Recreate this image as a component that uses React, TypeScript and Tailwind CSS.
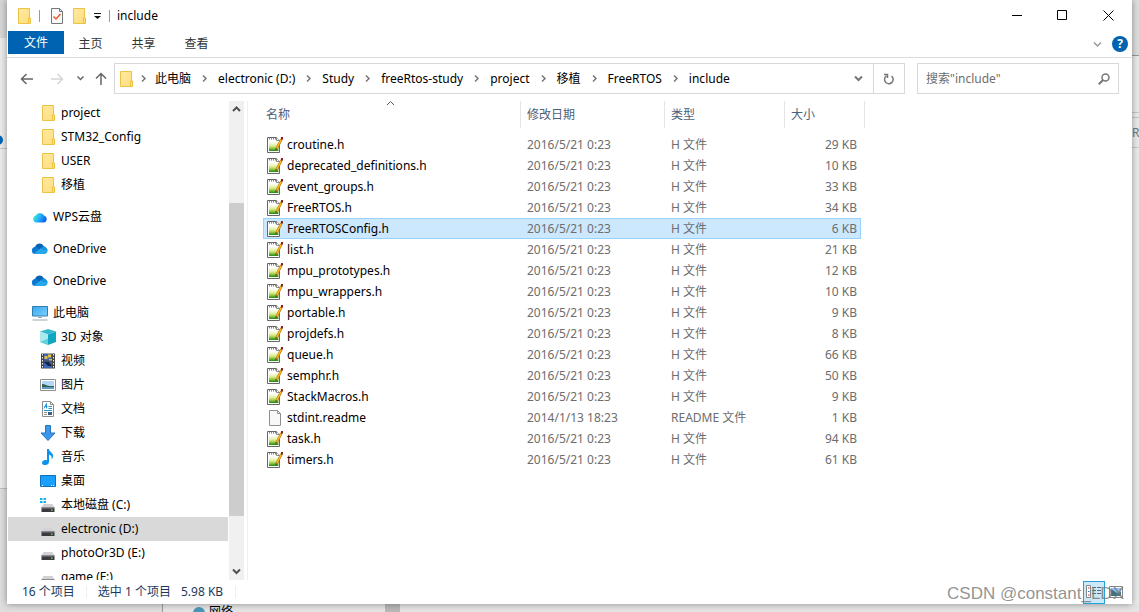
import type { ReactNode } from 'react';

type TreeItem = {
  name: string;
  icon: ReactNode;
  level: number;
  gap?: boolean; // espacio extra antes de cada grupo
  selected?: boolean;
};

const FolderIcon = () => (
  <svg width="14" height="16" viewBox="0 0 14 16" className="shrink-0">
    <defs>
      <linearGradient id="folder" x1="0" y1="0" x2="1" y2="1">
        <stop offset="0" stopColor="#ffe9a2" />
        <stop offset="1" stopColor="#ffdd7c" />
      </linearGradient>
    </defs>
    <path d="M1.500.5h11v9.500h1v5.500h-12z" fill="url(#folder)" stroke="#ecc444" />
    <path d="M11.500 15.500v-5.500h2" fill="none" stroke="#ecc444" />
  </svg>
);

const CloudIcon = () => (
  <svg width="16" height="16" viewBox="0 0 16 16" className="shrink-0">
    <path d="M3 7a4.600 4.600 0 0 1 8.500-2.300L13 7.500 6 9.500z" fill="#0a62b5" />
    <path d="M0 10A3.400 3.400 0 0 1 4.500 6.100L11 10.500 3 13A3 3 0 0 1 0 10z" fill="#0b78d4" />
    <path d="M9.500 6.800a4 4 0 0 1 4-.1A3.300 3.300 0 0 1 13 13H3l-1-.5 7.500-5.700z" fill="#28a8ea" />
    <path d="M10.500 5.500a3.500 3.500 0 0 1 4.200 2l1.100 2-7-1.500z" fill="#1490df" />
  </svg>
);

const WpsIcon = () => (
  <svg width="16" height="16" viewBox="0 0 16 16" className="shrink-0">
    <defs>
      <linearGradient id="wps" x1="0" y1=".3" x2="1" y2=".7">
        <stop offset="0" stopColor="#42f0c0" />
        <stop offset=".45" stopColor="#22b5ff" />
        <stop offset="1" stopColor="#0b55e8" />
      </linearGradient>
    </defs>
    <path
      d="M4.500 13.500a3.500 3.500 0 0 1-1-6.800 5 5 0 0 1 8.800 0 3.500 3.500 0 0 1-.8 6.800z"
      fill="url(#wps)"
    />
  </svg>
);

const PcIcon = () => (
  <svg width="16" height="16" viewBox="0 0 16 16" className="shrink-0">
    <defs>
      <linearGradient id="pc" x1="0" y1="0" x2="1" y2="1">
        <stop offset="0" stopColor="#35a8f5" />
        <stop offset="1" stopColor="#7ed0ff" />
      </linearGradient>
    </defs>
    <path d="M.5 1.500h15v9.500H.5z" fill="url(#pc)" stroke="#2f7fae" />
    <path d="M6 12.500h4M.5 15h15" stroke="#9aa7b0" />
  </svg>
);

const CubeIcon = () => (
  <svg width="16" height="16" viewBox="0 0 16 16" className="shrink-0">
    <path d="M8 0l8 2.500L8 5.500 0 2.500z" fill="#35b9cc" />
    <path d="M0 2.500l8 3V16l-8-3z" fill="#a9eaf0" />
    <path d="M16 2.500l-8 3V16l8-3z" fill="#10a5c0" />
    <path d="M0 13l8-3.500V16z" fill="#5fd0dc" />
  </svg>
);

const VideoIcon = () => (
  <svg width="16" height="16" viewBox="0 0 16 16" className="shrink-0">
    <path d="M1 .5h14v15H1z" fill="#444" />
    <path d="M4 1h8v6.500H4zM4 8.500h8V15H4z" fill="#3a66b5" />
    <path d="M4.500 3h3v3h-3zM8 1.500h3v3H8zM9 6h3v1.500H9z" fill="#e8c23c" />
    <path d="M4 9h5l3 4H8z" fill="#16233f" />
    <path d="M2.500 1v15M13.500 1v15" stroke="#eee" strokeDasharray="1.500 1.500" />
  </svg>
);

const PictureIcon = () => (
  <svg width="16" height="16" viewBox="0 0 16 16" className="shrink-0">
    <path d="M.5 2.500h15v11H.5z" fill="#fff" stroke="#909090" />
    <path d="M2 4h12v8H2z" fill="#b4d8f4" />
    <path d="M2 7c3 0 5 2 8 2h4v1H2z" fill="#2f6153" />
    <path d="M2 10h12v2H2z" fill="#5f9ac0" />
  </svg>
);

const DocIcon = () => (
  <svg width="16" height="16" viewBox="0 0 16 16" className="shrink-0">
    <path d="M2.500.5h8l3 3v12h-11z" fill="#fff" stroke="#8c8c8c" />
    <path d="M10.500.5v3h3" fill="none" stroke="#8c8c8c" />
    <path d="M4 7.500l2.500-5v5M4.500 5.500h3M8.500 5.500H12M8.500 7.500H12M4 9.500h8" fill="none" stroke="#2695dc" />
    <path d="M4 11.500h3M4 13.500h3" stroke="#999" />
    <path d="M8 11h4v3H8z" fill="#34628d" />
  </svg>
);

const DownloadIcon = () => (
  <svg width="16" height="16" viewBox="0 0 16 16" className="shrink-0">
    <path d="M5.500.5h5v7.500H15l-7 7.500L1 8h4.500z" fill="#3a96e8" stroke="#2777bd" />
  </svg>
);

const MusicIcon = () => (
  <svg width="16" height="16" viewBox="0 0 16 16" className="shrink-0">
    <path
      d="M7 0h2c0 3 4 3.500 4 7 0 1.500-.6 2.600-1.500 3.500.5-2.500 0-4-2.500-5v7.500c0 2-1.800 3-3.800 3S2 15.200 2 13.700s1.600-2.800 3.500-2.800c.6 0 1 .1 1.500.3z"
      fill="#0a93ec"
    />
  </svg>
);

const DesktopIcon = () => (
  <svg width="16" height="16" viewBox="0 0 16 16" className="shrink-0">
    <path d="M.5 2.500h15v11H.5z" fill="#19a0fc" stroke="#0d72bd" />
    <path d="M2 12.500h1M11 12.500h1M13 12.500h1" stroke="#fff" />
  </svg>
);

const DiskIcon = ({ system }: { system?: boolean }) => (
  <svg width="16" height="16" viewBox="0 0 16 16" className="shrink-0">
    <path d="M3.500 7h9l2 3.500h-13z" fill="#d2d2d6" />
    <path d="M1.500 10.500h13V15h-13z" fill="#3b3b3e" />
    <path d="M1.500 10.500h13v1h-13z" fill="#85858a" />
    <path d="M11 12.500h1.500V14H11z" fill="#4be04b" />
    {system && <path d="M0 1h2.500v2H0zM3.500 1H6v2H3.500zM0 4h2.500v2H0zM3.500 4H6v2H3.500z" fill="#0fb5ea" />}
  </svg>
);

const NotepadIcon = () => (
  <svg width="17" height="16" viewBox="0 0 17 16" className="shrink-0">
    <defs>
      <linearGradient id="notepad" x1="0" y1="0" x2="0" y2="1">
        <stop offset="0" stopColor="#fff" />
        <stop offset=".4" stopColor="#e5f1a4" />
        <stop offset=".6" stopColor="#b8dd62" />
        <stop offset="1" stopColor="#1f8a0c" />
      </linearGradient>
    </defs>
    <path d="M.5.5h9l3 3v12H.5z" fill="#fff" stroke="#666" />
    <path d="M9.500.5v3h3" fill="#fff" stroke="#888" />
    <path d="M2 4.500h9.500V14H2z" fill="url(#notepad)" />
    <path d="M2 1.500h7" stroke="#888" strokeDasharray="1 1" />
    <path d="M2 2.500h7" stroke="#bbb" strokeDasharray="1 1" />
    <path d="M14.500 2L9.500 12" stroke="#a86c12" strokeWidth="2.500" />
    <path d="M14.200 2.500l-4.500 9" stroke="#ffb91c" strokeWidth="1.500" />
    <path d="M8.700 11l-.4 2.800 2-1.800z" fill="#6c4b1d" />
    <path d="M14 0h2v2.500h-2z" fill="#852023" />
  </svg>
);

const BlankIcon = () => (
  <svg width="17" height="16" viewBox="0 0 17 16" className="shrink-0">
    <path d="M2.500.5h8l3 3v12h-11z" fill="#f8f8f8" stroke="#8f8f8f" />
    <path d="M10.500.5v3h3" fill="none" stroke="#8f8f8f" />
  </svg>
);

const Chevron = ({ dir, className }: { dir: 'up' | 'down' | 'right'; className?: string }) => (
  <svg width="9" height="9" viewBox="0 0 9 9" className={className} fill="none" stroke="currentColor">
    {dir === 'up' && <path d="M1 6l3.500-3.500L8 6" />}
    {dir === 'down' && <path d="M1 2.500L4.500 6 8 2.500" />}
    {dir === 'right' && <path d="M3 1.500l3 3-3 3" />}
  </svg>
);

const tree: TreeItem[] = [
  { name: 'project', icon: <FolderIcon />, level: 1 },
  { name: 'STM32_Config', icon: <FolderIcon />, level: 1 },
  { name: 'USER', icon: <FolderIcon />, level: 1 },
  { name: '移植', icon: <FolderIcon />, level: 1 },
  { name: 'WPS云盘', icon: <WpsIcon />, level: 0, gap: true },
  { name: 'OneDrive', icon: <CloudIcon />, level: 0, gap: true },
  { name: 'OneDrive', icon: <CloudIcon />, level: 0, gap: true },
  { name: '此电脑', icon: <PcIcon />, level: 0, gap: true },
  { name: '3D 对象', icon: <CubeIcon />, level: 1 },
  { name: '视频', icon: <VideoIcon />, level: 1 },
  { name: '图片', icon: <PictureIcon />, level: 1 },
  { name: '文档', icon: <DocIcon />, level: 1 },
  { name: '下载', icon: <DownloadIcon />, level: 1 },
  { name: '音乐', icon: <MusicIcon />, level: 1 },
  { name: '桌面', icon: <DesktopIcon />, level: 1 },
  { name: '本地磁盘 (C:)', icon: <DiskIcon system />, level: 1 },
  { name: 'electronic (D:)', icon: <DiskIcon />, level: 1, selected: true },
  { name: 'photoOr3D (E:)', icon: <DiskIcon />, level: 1 },
  { name: 'game (F:)', icon: <DiskIcon />, level: 1 },
];

const path = ['此电脑', 'electronic (D:)', 'Study', 'freeRtos-study', 'project', '移植', 'FreeRTOS', 'include'];

const files = [
  { name: 'croutine.h', size: 29 },
  { name: 'deprecated_definitions.h', size: 10 },
  { name: 'event_groups.h', size: 33 },
  { name: 'FreeRTOS.h', size: 34 },
  { name: 'FreeRTOSConfig.h', size: 6 },
  { name: 'list.h', size: 21 },
  { name: 'mpu_prototypes.h', size: 12 },
  { name: 'mpu_wrappers.h', size: 10 },
  { name: 'portable.h', size: 9 },
  { name: 'projdefs.h', size: 8 },
  { name: 'queue.h', size: 66 },
  { name: 'semphr.h', size: 50 },
  { name: 'StackMacros.h', size: 9 },
  { name: 'stdint.readme', size: 1, date: '2014/1/13 18:23', type: 'README 文件' },
  { name: 'task.h', size: 94 },
  { name: 'timers.h', size: 61 },
];

const selectedFile = 'FreeRTOSConfig.h';

const TitleBar = () => (
  <header className="flex h-[31px] shrink-0 items-center pl-[10px]">
    <FolderIcon />
    <span className="ml-2 h-3 w-px bg-[#999]" />
    <button aria-label="属性" className="ml-[10px]">
      <svg width="14" height="16" viewBox="0 0 14 16">
        <path d="M1.500.5h8l3 3v12h-11z" fill="#f7f9fb" stroke="#777" />
        <path d="M9.500.5v3h3" fill="none" stroke="#777" />
        <path d="M3.500 8.500l2.500 2.500 4.500-5" fill="none" stroke="#ea5b24" strokeWidth="1.500" />
      </svg>
    </button>
    <button aria-label="新建文件夹" className="ml-2">
      <FolderIcon />
    </button>
    <button aria-label="自定义快速访问工具栏" className="ml-2">
      <svg width="7" height="7" viewBox="0 0 7 7">
        <path d="M0 1.500h7" stroke="#111" />
        <path d="M0 4h7L3.500 7z" fill="#111" />
      </svg>
    </button>
    <span className="ml-2 h-3 w-px bg-[#999]" />
    <h1 className="ml-[7px]">include</h1>
    <div className="ml-auto flex text-black">
      <button aria-label="最小化" className="flex h-[30px] w-[46px] items-center justify-center">
        <svg width="11" height="11" viewBox="0 0 11 11" stroke="currentColor">
          <path d="M0 5.500h10" />
        </svg>
      </button>
      <button aria-label="最大化" className="flex h-[30px] w-[45px] items-center justify-center">
        <svg width="11" height="11" viewBox="0 0 11 11" fill="none" stroke="currentColor">
          <path d="M.5.5h9v9h-9z" />
        </svg>
      </button>
      <button aria-label="关闭" className="flex h-[30px] w-[47px] items-center justify-center">
        <svg width="11" height="11" viewBox="0 0 11 11" stroke="currentColor">
          <path d="M.5.5l10 10M10.500.5l-10 10" />
        </svg>
      </button>
    </div>
  </header>
);

const Ribbon = () => (
  <nav className="flex h-[27px] shrink-0 items-start border-b border-[#dadbdc] text-[#333]">
    <button className="ml-px h-[23px] w-14 bg-[#0063b1] text-white">文件</button>
    <button className="h-[25px] w-[53px]">主页</button>
    <button className="h-[25px] w-[53px]">共享</button>
    <button className="h-[25px] w-[53px]">查看</button>
    <div className="ml-auto flex h-[26px] items-center gap-[10px] pr-1">
      <button aria-label="展开功能区" className="text-[#999]">
        <Chevron dir="down" className="stroke-[1.5]" />
      </button>
      <button
        aria-label="帮助"
        className="flex size-4 items-center justify-center rounded-full bg-[#0063b1] font-bold text-white"
      >
        ?
      </button>
    </div>
  </nav>
);

const AddressBar = () => (
  <div className="flex h-[43px] shrink-0 items-start pt-[5px] pl-[13px] pr-[13px]">
    <div className="flex h-[31px] w-[94px] shrink-0 items-center text-[#666]">
      <button aria-label="后退">
        <svg width="14" height="12" viewBox="0 0 14 12" fill="none" stroke="currentColor" strokeWidth="1.500">
          <path d="M13 6H1.500M6.500 1l-5 5 5 5" />
        </svg>
      </button>
      <button aria-label="前进" className="ml-4 text-[#d5d5d5]">
        <svg width="14" height="12" viewBox="0 0 14 12" fill="none" stroke="currentColor" strokeWidth="1.500">
          <path d="M1 6h11.500M7.500 1l5 5-5 5" />
        </svg>
      </button>
      <button aria-label="最近浏览的位置" className="ml-[13px]">
        <svg width="7" height="5" viewBox="0 0 7 5" fill="none" stroke="currentColor" strokeWidth="1.500">
          <path d="M.5.500l3 3 3-3" />
        </svg>
      </button>
      <button aria-label="上移" className="ml-[11px]">
        <svg width="12" height="14" viewBox="0 0 12 14" fill="none" stroke="currentColor" strokeWidth="1.500">
          <path d="M6 13V1.500M1 6.500l5-5 5 5" />
        </svg>
      </button>
    </div>
    <div className="flex h-[31px] min-w-0 flex-1 items-center border border-[#d9d9d9] pl-1">
      <FolderIcon />
      {path.map((part, i) => (
        <div key={i} className="flex shrink-0 items-center">
          <Chevron
            dir="right"
            className={i === 0 ? 'ml-[6px] mr-[7px] stroke-[1.5] text-[#777]' : 'mx-[9px] stroke-[1.5] text-[#777]'}
          />
          <button>{part}</button>
        </div>
      ))}
      <button aria-label="以前的位置" className="ml-auto mr-[10px] text-[#777]">
        <Chevron dir="down" className="stroke-2" />
      </button>
      <button
        aria-label="刷新"
        className="flex h-full w-[31px] items-center justify-center border-l border-[#d9d9d9] text-[#777]"
      >
        <svg width="12" height="12" viewBox="0 0 12 12" fill="none" stroke="currentColor" strokeWidth="1.500">
          <path d="M3.500 2.800A4.300 4.300 0 1 0 8.500 3" />
          <path d="M1 1.500h3.500V5" />
        </svg>
      </button>
    </div>
    <div className="ml-3 flex h-[31px] w-[202px] shrink-0 items-center border border-[#d9d9d9] pl-2 pr-2">
      <input
        type="text"
        aria-label="搜索"
        placeholder='搜索"include"'
        className="min-w-0 flex-1 outline-none placeholder:text-[#6d6d6d]"
      />
      <svg width="12" height="12" viewBox="0 0 12 12" fill="none" stroke="#777" strokeWidth="1.500">
        <circle cx="7.500" cy="4.500" r="3.500" />
        <path d="M5 7L.8 11.200" strokeWidth="2" />
      </svg>
    </div>
  </div>
);

const Sidebar = () => (
  <aside className="flex w-[241px] shrink-0 border-r border-[#f0f0f0]">
    <ul className="ml-px w-[220px] overflow-hidden">
      {tree.map((item, i) => (
        <li key={i} className={item.gap ? 'mt-2' : ''}>
          <button
            className={`flex h-6 w-full items-center text-left ${item.level === 0 ? 'pl-6' : 'pl-8'} ${
              item.selected ? 'bg-[#d9d9d9]' : ''
            }`}
          >
            <span className="flex w-[21px] shrink-0 justify-start">
              <span className="flex w-4 justify-center">{item.icon}</span>
            </span>
            {item.name}
          </button>
        </li>
      ))}
    </ul>
    <div className="ml-px flex w-[15px] flex-col bg-[#f0f0f0] text-[#505050]">
      <button aria-label="向上滚动" className="flex h-[17px] items-center justify-center">
        <Chevron dir="up" className="stroke-2" />
      </button>
      <div className="flex flex-1 flex-col">
        <div className="basis-[85px]" />
        <div className="basis-[313px] bg-[#cdcdcd]" />
      </div>
      <button aria-label="向下滚动" className="flex h-[17px] items-center justify-center">
        <Chevron dir="down" className="stroke-2" />
      </button>
    </div>
  </aside>
);

const FileTable = () => (
  <main className="min-w-0 flex-1 overflow-hidden pl-[15px]">
    <table className="w-[602px] table-fixed border-separate border-spacing-0 text-left">
      <colgroup>
        <col className="w-[257px]" />
        <col className="w-36" />
        <col className="w-[120px]" />
        <col className="w-[77px]" />
        <col className="w-1" />
      </colgroup>
      <thead className="text-[#4c607a]">
        <tr className="h-[27px]">
          <th className="relative p-0 pl-[3px] font-normal">
            名称
            <Chevron dir="up" className="absolute left-[123px] -top-0.5 text-[#555]" />
          </th>
          <th className="border-l border-[#e5e5e5] p-0 pl-[6px] font-normal">修改日期</th>
          <th className="border-l border-[#e5e5e5] p-0 pl-[6px] font-normal">类型</th>
          <th className="border-l border-[#e5e5e5] p-0 pl-[6px] font-normal">大小</th>
          <td className="border-r border-[#e5e5e5] p-0" />
        </tr>
      </thead>
      <tbody className="text-[#6d6d6d]">
        <tr className="h-[6px]" aria-hidden="true">
          <td colSpan={5} className="p-0" />
        </tr>
        {files.map(file => {
          const on = file.name === selectedFile;
          const cell = on ? 'border-y border-[#99d1ff] bg-[#cce8ff] p-0' : 'p-0';
          return (
            <tr key={file.name} className="h-[21px] leading-4">
              <td className={on ? `${cell} border-l pl-[3px] text-black` : 'p-0 pl-1 text-black'}>
                <span className="flex items-center gap-[3px]">
                  {file.type ? <BlankIcon /> : <NotepadIcon />}
                  {file.name}
                </span>
              </td>
              <td className={`${cell} pl-[7px]`}>{file.date ?? '2016/5/21 0:23'}</td>
              <td className={`${cell} pl-[7px]`}>{file.type ?? 'H 文件'}</td>
              <td className={on ? `${cell} border-r pr-[3px] text-right` : 'p-0 pr-1 text-right'}>{file.size} KB</td>
              <td className="p-0" />
            </tr>
          );
        })}
      </tbody>
    </table>
  </main>
);

const StatusBar = () => (
  <footer className="relative flex h-6 shrink-0 items-center pl-[15px] pr-[9px] text-[#1e395b]">
    <span>16 个项目</span>
    <span className="mx-[11px] h-3 w-px bg-[#eee]" />
    <span>选中 1 个项目</span>
    <span className="ml-[10px]">5.98 KB</span>
    <span className="ml-3 h-3 w-px bg-[#eee]" />
    <div className="ml-auto flex items-center gap-1">
      <button
        aria-label="详细信息"
        className="flex h-[23px] w-[22px] items-center justify-center border border-[#26a0da] bg-[#cbe8f6]"
      >
        <svg width="16" height="14" viewBox="0 0 16 14">
          <path d="M.5.5h4v12h-4z" fill="#fff" stroke="#888" />
          <path d="M2 3h1.500M2 10h1.500" stroke="#b33" />
          <path d="M2 6.500h1.500" stroke="#28c" />
          <path d="M6 2.500h4M6 5.500h4M6 8.500h4M11 2.500h4M11 5.500h4M11 8.500h4" stroke="#667" />
        </svg>
      </button>
      <button aria-label="大缩略图">
        <svg width="14" height="12" viewBox="0 0 14 12">
          <path d="M.5.5h13v11H.5z" fill="#fff" stroke="#888" />
          <path d="M2 2h10v8H2z" fill="#8fc0f5" />
          <path d="M2 3l6 4 4-1v4H2z" fill="#3c7183" />
        </svg>
      </button>
    </div>
    {/* marca de agua sobre la barra de estado */}
    <span className="pointer-events-none absolute right-2 top-0 font-['Liberation_Sans'] text-[17px] leading-7 text-[#777]/80">
      CSDN @constant_LDX
    </span>
  </footer>
);

export default function App() {
  return (
    <div className="flex h-screen w-full flex-col overflow-hidden bg-[#e5e5e5] font-['Noto_Sans','Noto_Sans_CJK_SC',sans-serif] text-[12px] leading-4 text-black">
      <div className="flex min-h-0 flex-1">
        {/* ventana de fondo, lado izquierdo */}
        <div className="flex w-[7px] shrink-0 flex-col overflow-hidden bg-[#ebebeb]">
          <div className="h-[38px] bg-[#d6d6d6]" />
          <div className="mt-[97px] -ml-[7px] size-[10px] rounded-full bg-[#0063b1]" />
          <div className="mt-[3px] h-px bg-[#c8c8c8]" />
          <div className="mt-auto h-[116px] border-t border-[#c0c0c0] bg-[#dedede]" />
        </div>
        <div className="z-10 flex min-w-0 flex-1 flex-col bg-white shadow-[0_0_7px_rgba(0,0,0,0.4)]">
          <TitleBar />
          <Ribbon />
          <AddressBar />
          <div className="flex min-h-0 flex-1">
            <Sidebar />
            <FileTable />
          </div>
          <StatusBar />
        </div>
        {/* ventana de fondo, lado derecho */}
        <div className="flex w-[7px] shrink-0 flex-col overflow-hidden bg-[#ebebeb]">
          <div className="h-[56px] border-b border-[#999] bg-[#dedede]" />
          <div className="mt-14 h-[6px] border-y border-[#c8c8c8]" />
          <div className="h-[30px] border-b border-[#c8c8c8] leading-[30px] text-[#777]">RT</div>
        </div>
      </div>
      <div className="flex h-2 shrink-0 overflow-hidden bg-[#dedede]">
        <div className="w-[163px] border-r border-[#999]" />
        <div className="flex flex-1 bg-[#e5e5e5] pl-[30px]">
          <span className="mt-[3px] size-3 shrink-0 rounded-full bg-[#4c96b8]" />
          <span className="ml-1">网络</span>
          <span className="ml-[152px] w-[15px] bg-[#b9b9b9]" />
        </div>
      </div>
    </div>
  );
}
